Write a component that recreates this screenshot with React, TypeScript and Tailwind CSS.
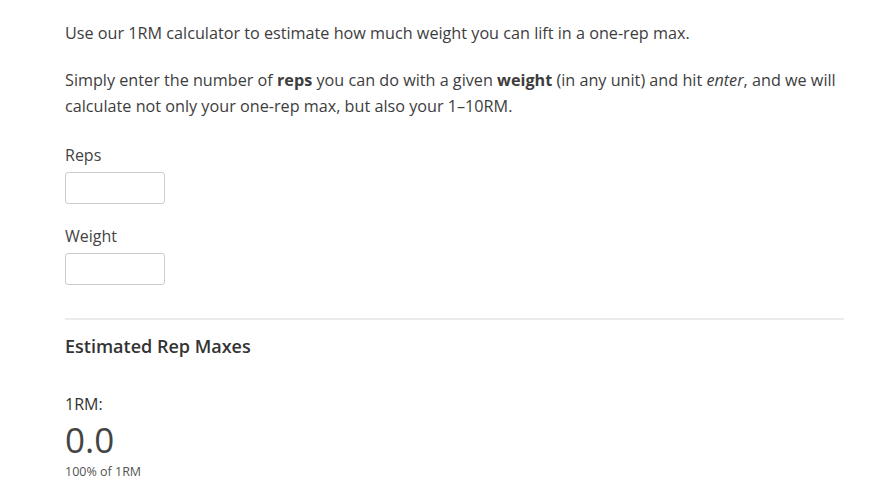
import React from 'react';

// one-rep max calculator page

const labelCls = "text-[16px] leading-[22px] text-[#444]";
const inputCls = "mt-[6px] h-[32px] w-[100px] rounded-[3px] border border-[#ccc] bg-white";

export default function App() {
    return (
        <div className="min-h-screen bg-white" style={{ fontFamily: '"Open Sans", "Noto Sans", sans-serif' }}>
            <div className="w-[779px] ml-[65px] pt-[20px] text-[#3d3d3d]">
                <p className="text-[16.2px] leading-[26px]">
                    Use our 1RM calculator to estimate how much weight you can lift in a one-rep max.
                </p>
                <p className="mt-[21px] text-[16.2px] leading-[26px]">
                    Simply enter the number of <b>reps</b> you can do with a given <b>weight</b> (in any unit) and hit <i>enter</i>, and we will calculate not only your one-rep max, but also your 1–10RM.
                </p>

                {/* inputs */}
                <div className="mt-[25px]">
                    <div className={labelCls}>Reps</div>
                    <div className={inputCls}></div>
                </div>
                <div className="mt-[21px]">
                    <div className={labelCls}>Weight</div>
                    <div className={inputCls}></div>
                </div>

                <div className="mt-[33px] border-t-2 border-[#ebebeb]"></div>

                {/* results */}
                <h2 className="mt-[14px] text-[18px] leading-[24px] font-semibold text-[#333]">Estimated Rep Maxes</h2>

                <div className="mt-[35px] text-[16px] leading-[22px] text-[#333]">1RM:</div>
                <div className="mt-[5px] text-[35px] leading-[40px] text-[#444]">0.0</div>
                <div className="mt-[4px] text-[12.5px] leading-[16px] text-[#555]">100% of 1RM</div>
            </div>
        </div>
    );
}
